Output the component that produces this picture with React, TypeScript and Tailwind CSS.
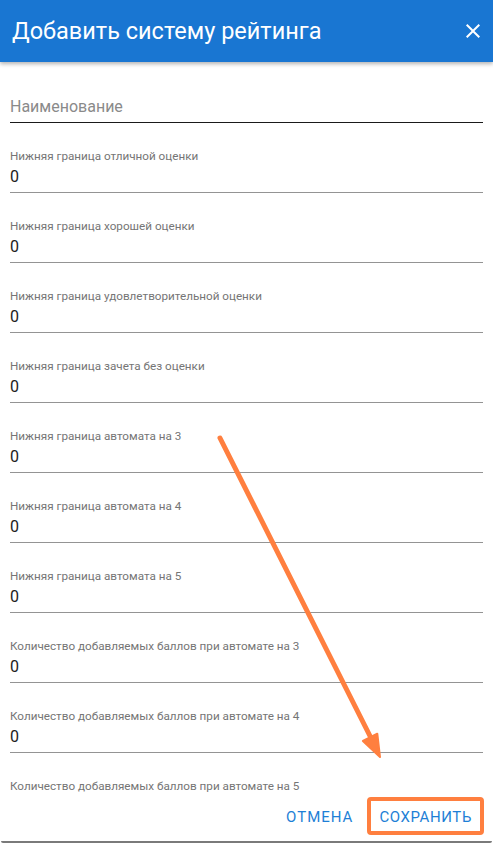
import React from 'react'

// Поля формы системы рейтинга
const fields = [
  'Нижняя граница отличной оценки',
  'Нижняя граница хорошей оценки',
  'Нижняя граница удовлетворительной оценки',
  'Нижняя граница зачета без оценки',
  'Нижняя граница автомата на 3',
  'Нижняя граница автомата на 4',
  'Нижняя граница автомата на 5',
  'Количество добавляемых баллов при автомате на 3',
  'Количество добавляемых баллов при автомате на 4',
  'Количество добавляемых баллов при автомате на 5',
]

function Field({ label }: { label: string }) {
  return (
    <div className="mt-[26px]">
      <div className="text-[11.7px] leading-[14px] text-[#757575]">{label}</div>
      <div className="mt-[4px] pb-[5px] text-[16px] leading-[20px] text-[#212121] border-b border-[#949494]">0</div>
    </div>
  )
}

export default function App() {
  return (
    <div
      className="relative w-[493px] h-[843px] flex flex-col overflow-hidden bg-white"
      style={{ fontFamily: 'Roboto, "Noto Sans", sans-serif' }}
    >
      {/* ── Header ─────────────────────────────── */}
      <div className="relative z-10 h-[62px] shrink-0 bg-[#1976d2] flex items-center justify-between pl-[12px] pr-[8px] shadow-[0_2px_4px_rgba(0,0,0,0.3)]">
        <h1 className="text-[23.5px] leading-[28px] text-white font-normal">Добавить систему рейтинга</h1>
        <svg className="w-[24px] h-[24px] text-white" viewBox="0 0 24 24" fill="currentColor">
          <path d="M19 6.41L17.59 5 12 10.59 6.41 5 5 6.41 10.59 12 5 17.59 6.41 19 12 13.41 17.59 19 19 17.59 13.41 12z" />
        </svg>
      </div>

      {/* ── Body ───────────────────────────────── */}
      <div className="flex-1 overflow-hidden px-[10px]">
        <div className="mt-[35px] pb-[5px] text-[16px] leading-[20px] text-[#8a8a8a] border-b border-[#1a1a1a]">
          Наименование
        </div>
        {fields.map(f => (
          <Field key={f} label={f} />
        ))}
      </div>

      {/* ── Footer ─────────────────────────────── */}
      <div className="h-[47px] shrink-0 flex items-center justify-end gap-[10px] pr-[13px] bg-white">
        <button className="h-[36px] px-[8px] text-[15px] tracking-[1px] text-[#1e7fd6] uppercase">Отмена</button>
        <button className="h-[36px] px-[8px] text-[15px] tracking-[0.6px] text-[#1e7fd6] uppercase">Сохранить</button>
      </div>
      <div className="h-[2px] shrink-0 mx-[1px] bg-[#7a7a7a] rounded-b" />

      {/* ── Аннотация ──────────────────────────── */}
      <div className="absolute left-[367px] top-[797px] w-[117px] h-[38px] border-[4px] border-[#ff7f3f] rounded-[4px]" />
      <svg className="absolute left-0 top-0 pointer-events-none" width="493" height="843">
        <line x1="220" y1="438" x2="372" y2="740" stroke="#ff7f3f" strokeWidth="5" strokeLinecap="round" />
        <polygon points="380,757 362.9,740.9 377.3,733.7" fill="#ff7f3f" stroke="#ff7f3f" strokeWidth="2" strokeLinejoin="round" />
      </svg>
    </div>
  )
}
